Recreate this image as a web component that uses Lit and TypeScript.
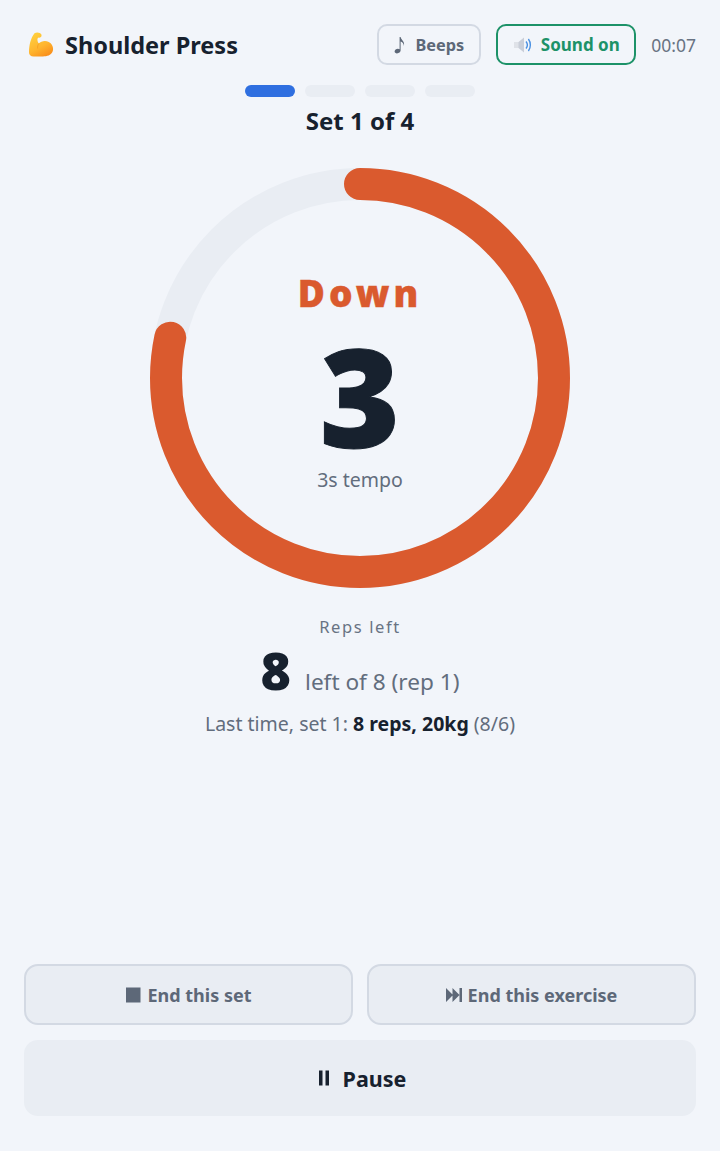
import { LitElement, html, css } from 'lit';
import { customElement } from 'lit/decorators.js';

const RING_R = 194;
const RING_LEN = 2 * Math.PI * RING_R;
const RING_DONE = 0.783;

@customElement('app-root')
export class AppRoot extends LitElement {
  static styles = css`
    :host {
      display: block;
      font-family: 'Noto Sans', 'Open Sans', sans-serif;
      background: #f2f5fa;
      color: #17212e;
    }
    .page {
      height: 1151px;
      box-sizing: border-box;
      display: flex;
      flex-direction: column;
      align-items: stretch;
      padding: 24px 24px 35px;
    }
    .top {
      display: flex;
      align-items: center;
      height: 41px;
    }
    .title {
      display: flex;
      align-items: center;
      gap: 11px;
      font-size: 23.5px;
      font-weight: 700;
      margin-left: 4px;
      flex: 1;
      white-space: nowrap;
    }
    .pill {
      box-sizing: border-box;
      height: 41px;
      display: flex;
      align-items: center;
      justify-content: center;
      border-radius: 10px;
      border: 2px solid #d3d9e3;
      color: #5d6878;
      font-size: 16.3px;
      font-weight: 700;
      white-space: nowrap;
    }
    .beeps { width: 104px; gap: 9px; }
    .sound {
      width: 140px;
      gap: 8px;
      margin-left: 15px;
      border-color: #1d9268;
      color: #1d9268;
      font-size: 17px;
    }
    .clock {
      margin-left: 15px;
      font-size: 17.5px;
      color: #687383;
    }
    .dots {
      display: flex;
      justify-content: center;
      gap: 10.33px;
      margin-top: 20px;
    }
    .dot {
      width: 50px;
      height: 12px;
      border-radius: 6px;
      background: #e9edf3;
    }
    .dot.on { background: #2f6fe0; }
    .set {
      text-align: center;
      font-size: 24px;
      font-weight: 700;
      line-height: 30px;
      margin-top: 9px;
    }
    .ring {
      position: relative;
      width: 420px;
      height: 420px;
      margin: 32px auto 0;
    }
    .ring svg { display: block; }
    .face {
      position: absolute;
      inset: 0;
      display: flex;
      flex-direction: column;
      align-items: center;
    }
    .phase {
      margin-top: 98px;
      font-size: 37px;
      line-height: 54px;
      font-weight: 900;
      letter-spacing: 4px;
      color: #da5a2e;
      -webkit-text-stroke: 0.4px #da5a2e;
    }
    .count {
      font-size: 137px;
      line-height: 130px;
      font-weight: 900;
      margin-top: 9.5px;
      -webkit-text-stroke: 1px #17212e;
    }
    .tempo {
      font-size: 19.5px;
      line-height: 26px;
      color: #626d7d;
      margin-top: 7.5px;
    }
    .reps-label {
      text-align: center;
      margin-top: 27px;
      font-size: 16.5px;
      line-height: 24px;
      letter-spacing: 1.6px;
      color: #687383;
    }
    .reps {
      display: flex;
      justify-content: center;
      align-items: baseline;
      gap: 14px;
      margin-top: 3px;
      color: #626d7d;
      font-size: 22.6px;
      line-height: 56px;
    }
    .reps b {
      font-size: 52px;
      font-weight: 900;
      color: #17212e;
    }
    .last {
      text-align: center;
      font-size: 19.5px;
      line-height: 28px;
      color: #626d7d;
    }
    .last b { color: #17212e; font-weight: 700; }
    .actions {
      margin-top: auto;
      display: grid;
      grid-template-columns: 1fr 1fr;
      gap: 15px 14px;
    }
    .btn {
      box-sizing: border-box;
      display: flex;
      align-items: center;
      justify-content: center;
      gap: 6px;
      height: 61px;
      border-radius: 14px;
      border: 2px solid #d3d9e3;
      background: #e9edf3;
      color: #5d6878;
      font-size: 18px;
      font-weight: 700;
    }
    .pause {
      grid-column: 1 / 3;
      height: 76px;
      border: none;
      gap: 13.5px;
      color: #17212e;
      font-size: 21.5px;
      font-weight: 700;
    }
  `;

  private muscle() {
    return html`<svg width="26" height="25" viewBox="0 0 26 25">
      <defs>
        <linearGradient id="arm" x1="0.15" y1="0" x2="0.7" y2="1">
          <stop offset="0" stop-color="#ffd23f"></stop>
          <stop offset="0.6" stop-color="#ffb52e"></stop>
          <stop offset="1" stop-color="#f98f1c"></stop>
        </linearGradient>
      </defs>
      <path fill="url(#arm)" d="M6.5 1.2 C8.5 -.2 12.6 .3 13.4 2.6 C14 4.6 12.4 6 10.6 5.6 L9.4 6.8 C9.4 8.8 9.8 10.4 10.8 11.6 C13 9 17.4 8.2 20.8 10 C24.8 12.1 26 16.6 24.4 20 C22.8 23.4 18.6 24.6 14 24.4 L5.6 24.4 C2.6 24.4 1 22.8 1 20.2 C1 13.6 2.6 6 6.5 1.2 Z"></path>
      <path fill="none" stroke="#f39a1f" stroke-width="1" stroke-linecap="round" opacity="0.7" d="M10.8 11.6 C9.8 13 9.4 14.6 9.6 16.2"></path>
    </svg>`;
  }

  private speaker() {
    return html`<svg width="20" height="18" viewBox="0 0 20 18">
      <path fill="#c9ced8" d="M1 6 H5.5 L11 1.5 V16.5 L5.5 12 H1 Z"></path>
      <path fill="#dfe2e8" d="M1 6 H5.5 V12 H1 Z"></path>
      <path fill="none" stroke="#4a90e2" stroke-width="1.4" d="M13 5.5 C14.6 7.5 14.6 10.5 13 12.5"></path>
      <path fill="none" stroke="#4a90e2" stroke-width="1.4" d="M15.4 3 C18 6.5 18 11.5 15.4 15"></path>
    </svg>`;
  }

  render() {
    return html`
      <div class="page">
        <div class="top">
          <div class="title">${this.muscle()}<span>Shoulder Press</span></div>
          <div class="pill beeps">
            <svg width="12" height="18" viewBox="0 0 12 18">
              <path fill="#5d6878" d="M5.6 1 H6.6 C7 4 11.4 5.5 9.8 10 C10 7 8.2 6 6.6 5.4 V14.6 C6.6 16.2 5 17.4 3 17.4 C1.6 17.4 .6 16.6 .6 15.5 C.6 14 2.2 12.8 3.9 12.8 C4.6 12.8 5.2 13 5.6 13.3 Z"></path>
            </svg>
            <span>Beeps</span>
          </div>
          <div class="pill sound">${this.speaker()}<span>Sound on</span></div>
          <div class="clock">00:07</div>
        </div>
        <div class="dots">
          <div class="dot on"></div>
          <div class="dot"></div>
          <div class="dot"></div>
          <div class="dot"></div>
        </div>
        <div class="set">Set 1 of 4</div>
        <div class="ring">
          <svg width="420" height="420" viewBox="0 0 420 420">
            <circle cx="210" cy="210" r="${RING_R}" fill="none" stroke="#e9edf3" stroke-width="32"></circle>
            <circle
              cx="210"
              cy="210"
              r="${RING_R}"
              fill="none"
              stroke="#da5a2e"
              stroke-width="32"
              stroke-linecap="round"
              stroke-dasharray="${RING_LEN * RING_DONE} ${RING_LEN}"
              transform="rotate(-90 210 210)"
            ></circle>
          </svg>
          <div class="face">
            <div class="phase">Down</div>
            <div class="count">3</div>
            <div class="tempo">3s tempo</div>
          </div>
        </div>
        <div class="reps-label">Reps left</div>
        <div class="reps"><b>8</b><span>left of 8 (rep 1)</span></div>
        <div class="last">Last time, set 1: <b>8 reps, 20kg</b> (8/6)</div>
        <div class="actions">
          <div class="btn">
            <svg width="16" height="16" viewBox="0 0 16 16"><rect x="1" y=".5" width="14.5" height="15" fill="#5d6878"></rect></svg>
            <span>End this set</span>
          </div>
          <div class="btn">
            <svg width="16" height="14" viewBox="0 0 16 14"><path fill="#5d6878" d="M0 0 L7 7 L0 14 Z M6.5 0 L13.5 7 L6.5 14 Z M13.5 0 H16 V14 H13.5 Z"></path></svg>
            <span>End this exercise</span>
          </div>
          <div class="btn pause">
            <svg width="15.5" height="16" viewBox="0 0 15.5 16"><path fill="#17212e" d="M5 .5 H8.5 V15.5 H5 Z M11.5 .5 H15 V15.5 H11.5 Z"></path></svg>
            <span>Pause</span>
          </div>
        </div>
      </div>
    `;
  }
}
